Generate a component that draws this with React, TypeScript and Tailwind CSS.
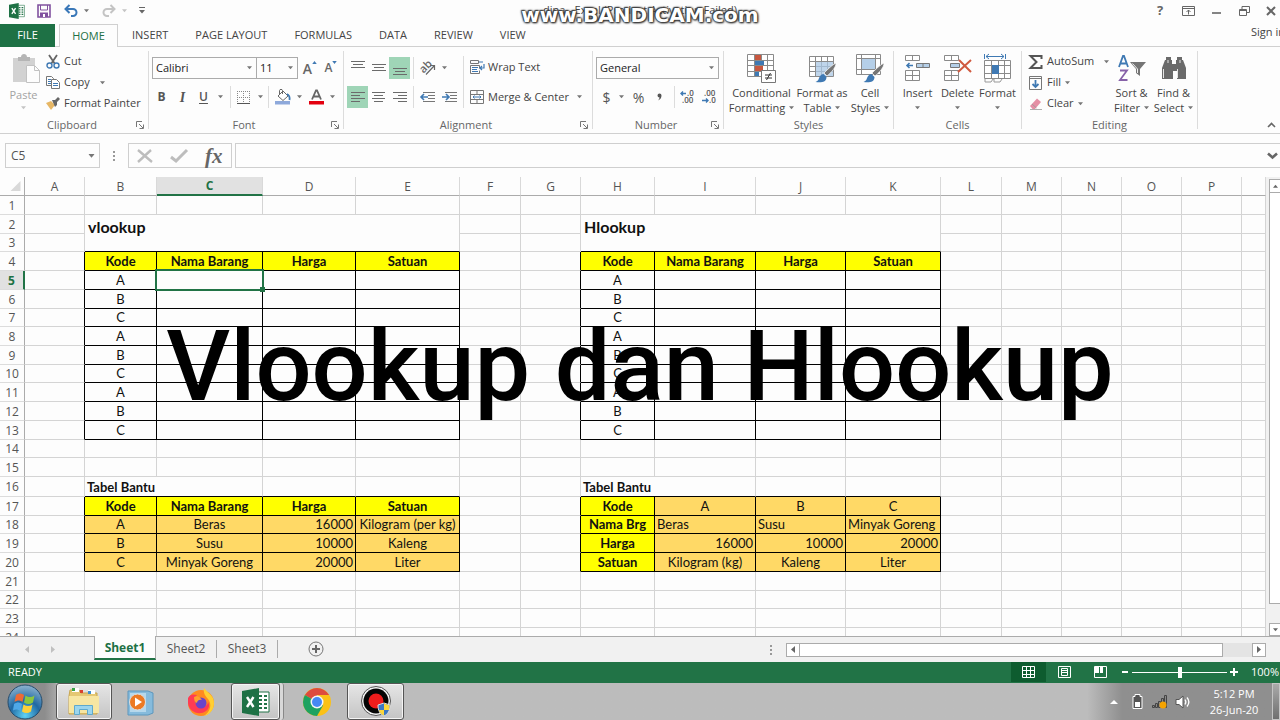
import type { ReactNode } from 'react';
import clsx from 'clsx';

/* ---------- small shared pieces ---------- */

function Caret({ className = 'text-[#777]' }: { className?: string }) {
  return (
    <svg viewBox="0 0 6 4" className={clsx('w-[5px] h-[4px] shrink-0', className)} fill="currentColor" aria-hidden="true">
      <path d="M0 0h6L3 3.6z" />
    </svg>
  );
}

function Icon({ w, h, className, children }: { w: number; h: number; className?: string; children: ReactNode }) {
  return (
    <svg width={w} height={h} viewBox={`0 0 ${w} ${h}`} fill="none" className={clsx('shrink-0 overflow-visible', className)} aria-hidden="true">
      {children}
    </svg>
  );
}

function Group({ title, launcher, className, children }: { title: string; launcher?: boolean; className?: string; children: ReactNode }) {
  return (
    <section aria-label={title} className={clsx('my-1 flex shrink-0 flex-col border-r border-[#dcdcdc]', className)}>
      <div className="flex h-[70px] items-start">{children}</div>
      <div className="flex h-2 items-center text-[#666]">
        <span className="flex-1 pl-2 text-center">{title}</span>
        {launcher ? (
          <button aria-label={`${title} settings`} className="mr-1">
            <Icon w={8} h={8}>
              <path d="M.5 6V.5H6M3 3l4 4M7.5 3.5v4h-4" stroke="#777" />
            </Icon>
          </button>
        ) : (
          <span className="w-2" />
        )}
      </div>
    </section>
  );
}

function SmallButton({ icon, label, caret, wide }: { icon: ReactNode; label: string; caret?: boolean; wide?: boolean }) {
  return (
    <button className="flex h-[21px] items-center whitespace-nowrap">
      <span className="flex w-[18px] justify-start">{icon}</span>
      {label}
      {caret && <Caret className={clsx('text-[#777]', wide ? 'ml-2.5' : 'ml-1')} />}
    </button>
  );
}

function BigButton({ icon, top, bottom, className }: { icon: ReactNode; top: string; bottom?: string; className?: string }) {
  return (
    <button className={clsx('flex shrink-0 flex-col items-center whitespace-nowrap leading-[15px]', className)}>
      <span className="flex h-[34px] items-center">{icon}</span>
      <span>{top}</span>
      <span className="flex h-[15px] items-center gap-1">
        {bottom}
        <Caret />
      </span>
    </button>
  );
}

function Combo({ label, value, className }: { label: string; value: string; className: string }) {
  return (
    <div className={clsx('flex h-[22px] items-center border border-[#ababab] bg-[#fdfdfd] pr-1', className)}>
      <select aria-label={label} className="min-w-0 flex-1 appearance-none pl-[3px] text-[11px] text-[#222]">
        <option>{value}</option>
      </select>
      <Caret />
    </div>
  );
}

function Tool({ label, on, className = 'w-[21px]', children }: { label: string; on?: boolean; className?: string; children: ReactNode }) {
  return (
    <button aria-label={label} className={clsx('flex h-[22px] shrink-0 items-center justify-center', className, on && 'bg-[#9fd5b7]')}>
      {children}
    </button>
  );
}

function Sep() {
  return <span className="h-[22px] w-px shrink-0 bg-[#dcdcdc]" />;
}

/* lines given as [x1, x2] pairs, three pixels apart */
function LineIcon({ rows, y }: { rows: number[][]; y: number }) {
  return (
    <Icon w={14} h={20}>
      {rows.map(([a, b], i) => (
        <path key={i} d={`M${a} ${y + i * 3 + 0.5}H${b}`} stroke="#6b6b6b" />
      ))}
    </Icon>
  );
}

function ExcelLogo({ className }: { className: string }) {
  return (
    <svg viewBox="0 0 28 28" className={className} aria-hidden="true">
      <path d="M15 4h12v20H15z" fill="#fff" stroke="#217346" />
      <path d="M17 7h3v2h-3zM22 7h3v2h-3zM17 11h3v2h-3zM22 11h3v2h-3zM17 15h3v2h-3zM22 15h3v2h-3zM17 19h3v2h-3zM22 19h3v2h-3z" fill="#217346" />
      <path d="M0 3l17-3v28L0 25z" fill="#1e7145" />
      <path d="M5 9l6.5 10M11.500 9L5 19" stroke="#fff" strokeWidth="2.400" />
    </svg>
  );
}

/* ---------- title bar and tabs ---------- */

function TitleBar() {
  return (
    <header className="relative flex h-6 shrink-0 items-center justify-between pb-[3px] pl-[9px]">
      <div className="flex items-center">
        <ExcelLogo className="mr-[12px] h-4 w-4" />
        <button aria-label="Save">
          <Icon w={14} h={14}>
            <path d="M1 1h12v12H1z" stroke="#80519f" strokeWidth="1.600" />
            <path d="M3.500 1v5h7V1" stroke="#80519f" />
            <path d="M3 8.500h8V13H3z" fill="#80519f" />
            <path d="M6 10h2v3H6z" fill="#fff" />
          </Icon>
        </button>
        <button aria-label="Undo" className="ml-[13px] flex items-center gap-[6px]">
          <Icon w={14} h={13}>
            <path d="M1.500 5H9a3.500 3.500 0 0 1 0 7H7M5.500 1l-4 4 4 4" stroke="#3a78b8" strokeWidth="2" />
          </Icon>
          <Caret />
        </button>
        <button aria-label="Redo" className="ml-[13px] flex items-center gap-[6px]">
          <Icon w={14} h={13}>
            <path d="M12.500 5H5a3.500 3.500 0 0 0 0 7h2M8.500 1l4 4-4 4" stroke="#c4c4c4" strokeWidth="2" />
          </Icon>
          <Caret className="text-[#c4c4c4]" />
        </button>
        <button aria-label="Customize toolbar" className="ml-[12px]">
          <Icon w={6} h={7}>
            <path d="M0 .5h6" stroke="#666" />
            <path d="M0 3h6L3 6.500z" fill="#666" />
          </Icon>
        </button>
      </div>
      <h1 className="absolute inset-x-0 -z-10 text-center text-[11px] text-[#444]">dina - Excel (Product Activation Failed)</h1>
      <div className="flex items-center gap-4 pr-1 text-[#666]">
        <button aria-label="Help" className="w-3 text-[13px] font-bold">?</button>
        <button aria-label="Ribbon options">
          <Icon w={13} h={10}>
            <path d="M.5.500h12v9H.5zM.5 2.500h12M6.500 8.500V4M4.500 6l2-2 2 2" stroke="#666" />
          </Icon>
        </button>
        <button aria-label="Minimize">
          <Icon w={12} h={10}><path d="M1 7h9" stroke="#666" strokeWidth="1.600" /></Icon>
        </button>
        <button aria-label="Restore">
          <Icon w={11} h={10}><path d="M.5 3.500h7v6h-7zM3 3.500v-3h7.500v6H8M.5 4.500h7" stroke="#666" /></Icon>
        </button>
        <button aria-label="Close">
          <Icon w={10} h={10}><path d="M1 1l8 8M9 1L1 9" stroke="#666" strokeWidth="2" /></Icon>
        </button>
      </div>
    </header>
  );
}

function Watermark() {
  return (
    <div className="pointer-events-none absolute inset-x-0 top-1 z-20 text-center font-['DejaVu_Sans',sans-serif] text-[20px] leading-[22px] font-bold text-white [text-shadow:0_0_2px_#333,0_0_2px_#333,0_0_3px_#333,1px_1px_2px_#333,-1px_-1px_1px_#555]">
      www.BANDICAM.com
    </div>
  );
}

const tabs = ['INSERT', 'PAGE LAYOUT', 'FORMULAS', 'DATA', 'REVIEW', 'VIEW'];

function TabRow() {
  return (
    <nav className="flex h-[23px] shrink-0 items-stretch overflow-hidden text-[#444]">
      <a href="#file" className="flex w-[55px] items-center justify-center bg-[#1e7145] text-white">FILE</a>
      <span className="w-1 border-b border-[#d0d0d0]" />
      <a href="#home" className="flex w-[59px] items-center justify-center border border-b-0 border-[#d0d0d0] text-[#1e7145]">HOME</a>
      <div className="flex flex-1 items-center gap-[27px] border-b border-[#d0d0d0] pl-[14px]">
        {tabs.map((t) => (
          <a key={t} href={`#${t.toLowerCase().replace(' ', '-')}`} className="whitespace-nowrap">{t}</a>
        ))}
      </div>
      <div className="w-[29px] overflow-hidden border-b border-[#d0d0d0]">
        <button className="whitespace-nowrap">Sign in</button>
      </div>
    </nav>
  );
}

/* ---------- ribbon ---------- */

function Grid({ w = 24, h = 20 }: { w?: number; h?: number }) {
  return <path d={`M.5.500h${w}v${h}h-${w}zM6.500.500v${h}M12.500.500v${h}M18.500.500v${h}M.5 5.500h${w}M.5 10.500h${w}M.5 15.500h${w}`} stroke="#8a8a8a" fill="#fff" />;
}

function Brush({ x, y }: { x: number; y: number }) {
  return (
    <g transform={`translate(${x} ${y})`}>
      <path d="M20 0c0 4-4 9-9 13l-3-3C12 6 16 2 20 0z" fill="#757575" stroke="#fff" strokeWidth=".7" />
      <path d="M7.500 11l3 3c0 5-5 6-11 5 3-1 3-3 4-5s2.500-3 4-3z" fill="#3f79b3" />
    </g>
  );
}

function Clipboard() {
  return (
    <Group title="Clipboard" launcher className="w-[149px]">
      <button className="ml-1 flex w-[39px] flex-col items-center leading-[15px] text-[#a3a3a3]">
        <span className="flex h-[36px] items-center">
          <Icon w={28} h={30} className="ml-1">
            <path d="M1 4h22v24H1z" fill="#d2d2d2" />
            <path d="M6 7V3h3c0-4 6-4 6 0h3v4z" fill="#b5b5b5" />
            <path d="M14.500 11.500h8l5 5v12h-13z" fill="#fdfdfd" stroke="#c2c2c2" />
            <path d="M22.500 11.500v5h5" stroke="#c2c2c2" />
          </Icon>
        </span>
        <span>Paste</span>
        <span className="flex h-[11px] items-center"><Caret className="text-[#c4c4c4]" /></span>
      </button>
      <div className="ml-[3px] flex flex-col">
        <SmallButton
          label="Cut"
          icon={
            <Icon w={14} h={14}>
              <path d="M3 0l6 9M11 0L5 9" stroke="#666" strokeWidth="1.800" />
              <circle cx="3.500" cy="10.500" r="2.500" stroke="#3f79b3" strokeWidth="1.400" />
              <circle cx="10.500" cy="10.500" r="2.500" stroke="#3f79b3" strokeWidth="1.400" />
            </Icon>
          }
        />
        <SmallButton
          label="Copy"
          caret
          wide
          icon={
            <Icon w={14} h={13}>
              <path d="M.5.500h5l2 2v7h-7z" fill="#fff" stroke="#777" />
              <path d="M2 3.500h3M2 5.500h3M2 7.500h3" stroke="#3f79b3" />
              <path d="M5.500 3.500h5l3 3v6h-8z" fill="#fff" stroke="#777" />
              <path d="M7 7.500h5M7 9.500h5" stroke="#3f79b3" />
            </Icon>
          }
        />
        <SmallButton
          label="Format Painter"
          icon={
            <Icon w={14} h={13}>
              <path d="M0 6l5-2 4 4-4 5z" fill="#e7b765" />
              <path d="M6 3l3 0 3-3 2 2-3 3v3l-2 2z" fill="#666" />
            </Icon>
          }
        />
      </div>
    </Group>
  );
}

function FontGroup() {
  return (
    <Group title="Font" launcher className="w-[195px]">
      <div className="flex flex-col gap-[7px] pt-[6px]">
        <div className="flex items-center pl-[3px]">
          <Combo label="Font name" value="Calibri" className="w-[105px]" />
          <Combo label="Font size" value="11" className="w-[41px] border-l-0" />
          <Tool label="Increase font size" className="w-[24px]">
            <span className="text-[14px] font-semibold text-[#666]">A</span>
            <svg viewBox="0 0 6 4" className="mb-3 h-[3px] w-[5px]" fill="#3f79b3" aria-hidden="true"><path d="M0 4h6L3 0z" /></svg>
          </Tool>
          <Tool label="Decrease font size" className="w-[18px]">
            <span className="text-[12px] font-semibold text-[#666]">A</span>
            <svg viewBox="0 0 6 4" className="mb-3 h-[3px] w-[5px]" fill="#3f79b3" aria-hidden="true"><path d="M0 0h6L3 4z" /></svg>
          </Tool>
        </div>
        <div className="flex items-center pl-[2px] text-[12px] text-[#555]">
          <Tool label="Bold"><b>B</b></Tool>
          <Tool label="Italic"><i className="font-['Liberation_Serif',serif] text-[14px] font-bold">I</i></Tool>
          <Tool label="Underline"><span className="font-semibold underline underline-offset-2">U</span></Tool>
          <Tool label="Underline style" className="w-[12px]"><Caret /></Tool>
          <span className="w-1" />
          <Sep />
          <Tool label="Borders" className="w-6">
            <Icon w={13} h={13}>
              <path d="M.5 0v12M6.500 0v12M12.500 0v12M0 .5h13M0 6.500h13" stroke="#888" strokeDasharray="1 1" />
              <path d="M0 12.500h13" stroke="#555" />
            </Icon>
          </Tool>
          <Tool label="Border style" className="w-[10px]"><Caret /></Tool>
          <span className="w-[3px]" />
          <Sep />
          <Tool label="Fill color" className="w-7">
            <Icon w={16} h={16}>
              <path d="M3 7l5-5 5 5-5 4.500z" fill="#fff" stroke="#666" />
              <path d="M7.500 5V1.500c0-1.500-3-1.500-3 0V5" stroke="#666" />
              <path d="M12 5c2 1 3 3 2.500 6" stroke="#3f79b3" strokeWidth="1.800" />
              <path d="M0 12h15v3.500H0z" fill="#8ea9db" />
            </Icon>
          </Tool>
          <Caret />
          <Tool label="Font color" className="w-7">
            <Icon w={15} h={16}>
              <path d="M3 10.500L7 1.500h1l4 9M4.500 7.500h6" stroke="#666" strokeWidth="1.800" />
              <path d="M0 12h15v3.500H0z" fill="#e3000f" />
            </Icon>
          </Tool>
          <Caret />
        </div>
      </div>
    </Group>
  );
}

function IndentIcon({ back }: { back?: boolean }) {
  return (
    <Icon w={16} h={12}>
      <path d="M3 1.500h12M8 4.500h7M8 7.500h7M3 10.500h12" stroke="#777" />
      <path d={back ? 'M8 6H1.500M4 3L1 6l3 3' : 'M0 6h6M4 3l3 3-3 3'} stroke="#3f79b3" strokeWidth="1.600" />
    </Icon>
  );
}

function AlignmentGroup() {
  return (
    <Group title="Alignment" launcher className="w-[249px]">
      <div className="flex h-[57px] w-[119px] flex-col gap-[7px] pt-[6px] pl-[3px]">
        <div className="flex items-center">
          <Tool label="Top align"><LineIcon y={3} rows={[[0, 14], [2, 12], [0, 14]]} /></Tool>
          <Tool label="Middle align"><LineIcon y={6} rows={[[0, 14], [2, 12], [0, 14]]} /></Tool>
          <Tool label="Bottom align" on><LineIcon y={10} rows={[[0, 14], [2, 12], [0, 14]]} /></Tool>
          <span className="w-[3px]" />
          <Sep />
          <Tool label="Orientation" className="w-7">
            <Icon w={16} h={14}>
              <text x="0" y="10" transform="rotate(-45 5 7)" fontSize="11" fontWeight="600" fill="#666" fontFamily="Open Sans, sans-serif">ab</text>
              <path d="M6 13.500L14 5M10 4.500h4.500V9" stroke="#666" strokeWidth="1.200" />
            </Icon>
          </Tool>
          <Caret />
        </div>
        <div className="flex items-center">
          <Tool label="Align left" on><LineIcon y={5} rows={[[0, 14], [0, 9], [0, 14], [0, 9]]} /></Tool>
          <Tool label="Center"><LineIcon y={5} rows={[[0, 13], [2, 11], [0, 13], [2, 11]]} /></Tool>
          <Tool label="Align right"><LineIcon y={5} rows={[[0, 14], [5, 14], [0, 14], [5, 14]]} /></Tool>
          <span className="w-[3px]" />
          <Sep />
          <Tool label="Decrease indent" className="w-7"><IndentIcon back /></Tool>
          <Tool label="Increase indent" className="w-4"><IndentIcon /></Tool>
        </div>
      </div>
      <div className="mt-[5px] flex flex-1 flex-col gap-2 border-l border-[#dcdcdc] pl-[6px]">
        <button className="flex h-[22px] items-center gap-[3px] whitespace-nowrap">
          <Icon w={15} h={14}>
            <path d="M.5.500h8v3h-8zM.5 5.500h9v3M.5 5.500v8h9v-3" stroke="#777" />
            <path d="M2 7.500h6M2 9.500h5M2 11.500h6M9 2h4" stroke="#3f79b3" />
            <path d="M14 4v4h-4M12 6l-2 2 2 2" stroke="#3f79b3" strokeWidth="1.200" />
          </Icon>
          Wrap Text
        </button>
        <button className="flex h-[22px] items-center gap-1 whitespace-nowrap">
          <Icon w={14} h={14}>
            <path d="M.5.500h13v13H.5zM.5 4.500h13M.5 9.500h13M7 .5v4M7 9.500v4" stroke="#777" />
            <path d="M3 7h8M4.500 5.500L3 7l1.500 1.500M9.500 5.500L11 7 9.500 8.500" stroke="#3f79b3" />
          </Icon>
          Merge &amp; Center
          <Caret className="ml-1 text-[#777]" />
        </button>
      </div>
    </Group>
  );
}

function DecimalIcon({ up }: { up?: boolean }) {
  return (
    <Icon w={15} h={14}>
      <g fontSize="8" fontWeight="600" fill="#555" fontFamily="Open Sans, sans-serif">
        <text x={up ? 7 : 2} y="6">{up ? '.0' : '.00'}</text>
        <text x={up ? 2 : 7} y="13">{up ? '.00' : '.0'}</text>
      </g>
      <path d={up ? 'M6 3.500H1M3 1.500L1 3.500l2 2' : 'M0 10.500h6M4 8.500l2 2-2 2'} stroke="#3f79b3" strokeWidth="1.400" />
    </Icon>
  );
}

function NumberGroup() {
  return (
    <Group title="Number" launcher className="w-[131px]">
      <div className="flex flex-1 flex-col gap-[7px] pt-[6px] pl-[3px]">
        <Combo label="Number format" value="General" className="w-[123px]" />
        <div className="flex items-center text-[14px] text-[#555]">
          <Tool label="Currency">$</Tool>
          <Tool label="Currency symbol" className="w-2"><Caret /></Tool>
          <Tool label="Percent" className="w-[27px]">%</Tool>
          <Tool label="Comma style" className="w-[14px]">
            <Icon w={5} h={8}><path d="M.5 2.500a2 2 0 1 1 4 0c0 2-1 4-3.500 5 1-1 1.500-2 1.500-3-1 0-2-.8-2-2z" fill="#555" /></Icon>
          </Tool>
          <span className="w-2" />
          <Sep />
          <Tool label="Increase decimal" className="w-6"><DecimalIcon up /></Tool>
          <Tool label="Decrease decimal"><DecimalIcon /></Tool>
        </div>
      </div>
    </Group>
  );
}

function StylesGroup() {
  return (
    <Group title="Styles" className="w-[170px]">
      <BigButton
        className="ml-[3px] w-[69px]"
        top="Conditional"
        bottom="Formatting"
        icon={
          <Icon w={29} h={29}>
            <path d="M.5.500h26v22h-26zM7.500.500v22M14.500.500v22M20.500.500v22M.5 6.500h26M.5 11.500h26M.5 17.500h26" stroke="#8a8a8a" fill="#fff" />
            <path d="M8 1h6v5H8z" fill="#c8573f" />
            <path d="M8 7h9v4H8z" fill="#3f79b3" />
            <path d="M8 12h8v5H8z" fill="#c8573f" />
            <path d="M8 18h4v4H8z" fill="#3f79b3" />
            <path d="M14.500 16.500h14v12h-14z" fill="#fff" stroke="#777" />
            <path d="M18 21h7M18 24h7M23.500 19l-4 7" stroke="#333" />
          </Icon>
        }
      />
      <BigButton
        className="w-[52px]"
        top="Format as"
        bottom="Table"
        icon={
          <Icon w={29} h={29}>
            <g transform="translate(1 2)">
              <Grid />
              <path d="M7 6h17v14H7z" fill="#a9c7e4" fillOpacity=".75" />
            </g>
            <Brush x={8} y={9} />
          </Icon>
        }
      />
      <BigButton
        className="w-[44px]"
        top="Cell"
        bottom="Styles"
        icon={
          <Icon w={29} h={29}>
            <path d="M.5.500h24v20h-24zM5.500.500v20M19.500.500v20M.5 4.500h24M.5 15.500h24" stroke="#8a8a8a" fill="#fff" />
            <path d="M6 5h13v10H6z" fill="#b5cfe8" />
            <Brush x={8} y={9} />
          </Icon>
        }
      />
    </Group>
  );
}

function CellsGroup() {
  const blocks = 'M.5.500h14v5H.5zM7.500.500v5M.5 15.500h14v10H.5zM7.500 15.500v10M.5 20.500h14';
  return (
    <Group title="Cells" className="w-[128px]">
      <BigButton
        className="ml-1 w-[39px]"
        top="Insert"
        icon={
          <Icon w={26} h={27}>
            <path d={blocks} stroke="#8a8a8a" fill="#fff" />
            <path d="M11.500 8.500h13v4h-13zM18 8.500v4" stroke="#777" fill="#b5cfe8" />
            <path d="M8 10.500H2M4.500 8L2 10.500 4.500 13" stroke="#3f79b3" strokeWidth="1.600" />
          </Icon>
        }
      />
      <BigButton
        className="w-[41px]"
        top="Delete"
        icon={
          <Icon w={28} h={27}>
            <path d={blocks} stroke="#8a8a8a" fill="#fff" />
            <path d="M6.500 8.500h9v4h-9z" stroke="#777" fill="#b5cfe8" />
            <path d="M15 5l12 12M27 5L14 17" stroke="#d0593f" strokeWidth="2" />
          </Icon>
        }
      />
      <BigButton
        className="w-[39px]"
        top="Format"
        icon={
          <Icon w={27} h={29}>
            <path d="M.5 0v5M21.500 0v5M2 2.500h18M5 0L2 2.500 5 5M17 0l3 2.500L17 5" stroke="#3f79b3" />
            <path d="M.5 6.500h26v18H.5zM7.500 6.500v18M14.500 6.500v18M20.500 6.500v18M.5 11.500h26M.5 19.500h26" stroke="#8a8a8a" fill="#fff" />
            <path d="M8 11h7v9H8z" fill="#3f79b3" />
            <path d="M1 25v3h6l2-3h1v3h6l2-3" stroke="#999" />
          </Icon>
        }
      />
    </Group>
  );
}

function EditingGroup() {
  return (
    <Group title="Editing" className="w-[176px]">
      <div className="flex w-[88px] shrink-0 flex-col pl-[7px]">
        <SmallButton
          label="AutoSum"
          caret
          wide
          icon={<Icon w={14} h={14}><path d="M12.500 4V1H1.500l6 6-6 6h11v-3" stroke="#555" strokeWidth="2" /></Icon>}
        />
        <SmallButton
          label="Fill"
          caret
          icon={
            <Icon w={13} h={14}>
              <path d="M.5.500h12v13H.5zM.5 2.500h12" stroke="#777" />
              <path d="M6.500 4v7M3.500 8l3 3 3-3" stroke="#3f79b3" strokeWidth="1.800" />
            </Icon>
          }
        />
        <SmallButton
          label="Clear"
          caret
          icon={
            <Icon w={14} h={12}>
              <path d="M1 8l7-7.500 4 3.500-6 7H3.500z" fill="#e58fa5" />
              <path d="M3 6l4.500 4M1 11.500h12" stroke="#999" strokeWidth=".8" />
            </Icon>
          }
        />
      </div>
      <BigButton
        className="w-[43px]"
        top="Sort &amp;"
        bottom="Filter"
        icon={
          <Icon w={28} h={27}>
            <path d="M1 12L5 1h1l4 11M2.500 8.500h6" stroke="#3f79b3" strokeWidth="1.800" />
            <path d="M2 15.500h7l-7 9.500h7.500" stroke="#8661a8" strokeWidth="1.800" />
            <path d="M12 7h16l-6 7v7l-4-3v-4z" fill="#757575" />
            <path d="M14.500 8.500l5 5.500v4" stroke="#eee" />
          </Icon>
        }
      />
      <BigButton
        className="w-[41px]"
        top="Find &amp;"
        bottom="Select"
        icon={
          <Icon w={26} h={24}>
            <path d="M5 1h5v3h1v4h4V4h1V1h5v3h1l3 8v11h-9v-8h-4v8H1V12l3-8h1z" fill="#6a6a6a" />
            <path d="M2.500 13v9M16.500 13v9M7 4v3M19 4v3" stroke="#e5e5e5" />
          </Icon>
        }
      />
    </Group>
  );
}

function Ribbon() {
  return (
    <div className="flex h-[87px] shrink-0 items-stretch overflow-hidden border-b border-[#d0d0d0] text-[#444]">
      <Clipboard />
      <FontGroup />
      <AlignmentGroup />
      <NumberGroup />
      <StylesGroup />
      <CellsGroup />
      <EditingGroup />
      <button aria-label="Collapse ribbon" className="mr-[4px] mb-[5px] ml-auto self-end">
        <Icon w={9} h={6}><path d="M1 5l3.500-3.500L8 5" stroke="#666" strokeWidth="1.600" /></Icon>
      </button>
    </div>
  );
}

function FormulaBar() {
  return (
    <div className="mt-[9px] mb-[9px] flex h-[25px] shrink-0 items-stretch pl-[5px] text-[12px] text-[#555]">
      <div className="flex w-[95px] items-center border border-[#cfcfcf] pr-[5px] pl-[5px]">
        <input aria-label="Name box" defaultValue="C5" className="min-w-0 flex-1 outline-none" />
        <Caret className="scale-125 text-[#777]" />
      </div>
      <div className="flex w-7 items-center justify-center">
        <Icon w={2} h={12}><path d="M1 1v11" stroke="#999" strokeWidth="2" strokeDasharray="2 2" /></Icon>
      </div>
      <div className="flex w-[104px] items-center justify-around border border-[#cfcfcf]">
        <button aria-label="Cancel">
          <Icon w={16} h={14}><path d="M1 1l14 12M14 1L1 13" stroke="#bdbdbd" strokeWidth="2.400" /></Icon>
        </button>
        <button aria-label="Enter">
          <Icon w={18} h={14}><path d="M1 8l5 4L17 1" stroke="#bdbdbd" strokeWidth="3" /></Icon>
        </button>
        <button aria-label="Insert function" className="font-['Liberation_Serif',serif] text-[21px] leading-[20px] font-bold text-[#666] italic">fx</button>
      </div>
      <div className="ml-[3px] flex flex-1 items-center border border-r-0 border-[#cfcfcf] pr-[2px]">
        <input aria-label="Formula" className="min-w-0 flex-1 outline-none" />
        <button aria-label="Expand formula bar">
          <Icon w={11} h={8}><path d="M1 1.500l4.500 4 4.500-4" stroke="#666" strokeWidth="2.600" /></Icon>
        </button>
      </div>
    </div>
  );
}

/* ---------- worksheet ---------- */

const columns = [
  { id: 'A', w: 'w-[60px]' },
  { id: 'B', w: 'w-[72px]' },
  { id: 'C', w: 'w-[106px]' },
  { id: 'D', w: 'w-[93px]' },
  { id: 'E', w: 'w-[104px]' },
  { id: 'F', w: 'w-[61px]' },
  { id: 'G', w: 'w-[60px]' },
  { id: 'H', w: 'w-[74px]' },
  { id: 'I', w: 'w-[101px]' },
  { id: 'J', w: 'w-[90px]' },
  { id: 'K', w: 'w-[95px]' },
  { id: 'L', w: 'w-[61px]' },
  { id: 'M', w: 'w-[60px]' },
  { id: 'N', w: 'w-[60px]' },
  { id: 'O', w: 'w-[60px]' },
  { id: 'P', w: 'w-[60px]' },
  { id: '', w: '' },
];

const shortRows = [3, 7, 10, 14, 18, 22];

type Kind = 'head' | 'plain' | 'gold' | 'goldLeft' | 'goldRight';

const kinds: Record<Kind, string> = {
  head: 'bg-[#ffff00] text-center font-bold',
  plain: 'text-center',
  gold: 'bg-[#ffd966] text-center',
  goldLeft: 'bg-[#ffd966] pl-[2px] text-left',
  goldRight: 'bg-[#ffd966] pr-[2px] text-right',
};

const cells: Record<string, [string, Kind]> = {};

function fill(row: number, start: string, values: string[], rowKinds: Kind[]) {
  values.forEach((v, i) => {
    cells[String.fromCharCode(start.charCodeAt(0) + i) + row] = [v, rowKinds[i]];
  });
}

const heads: Kind[] = ['head', 'head', 'head', 'head'];

for (const start of ['B', 'H']) {
  fill(4, start, ['Kode', 'Nama Barang', 'Harga', 'Satuan'], heads);
  for (let r = 5; r <= 13; r++) fill(r, start, ['ABC'[(r - 5) % 3]], ['plain']);
}
fill(17, 'B', ['Kode', 'Nama Barang', 'Harga', 'Satuan'], heads);
fill(18, 'B', ['A', 'Beras', '16000', 'Kilogram (per kg)'], ['gold', 'gold', 'goldRight', 'gold']);
fill(19, 'B', ['B', 'Susu', '10000', 'Kaleng'], ['gold', 'gold', 'goldRight', 'gold']);
fill(20, 'B', ['C', 'Minyak Goreng', '20000', 'Liter'], ['gold', 'gold', 'goldRight', 'gold']);
fill(17, 'H', ['Kode', 'A', 'B', 'C'], ['head', 'gold', 'gold', 'gold']);
fill(18, 'H', ['Nama Brg', 'Beras', 'Susu', 'Minyak Goreng'], ['head', 'goldLeft', 'goldLeft', 'goldLeft']);
fill(19, 'H', ['Harga', '16000', '10000', '20000'], ['head', 'goldRight', 'goldRight', 'goldRight']);
fill(20, 'H', ['Satuan', 'Kilogram (kg)', 'Kaleng', 'Liter'], ['head', 'gold', 'gold', 'gold']);

function boxed(col: number, row: number) {
  const inCols = (col >= 1 && col <= 4) || (col >= 7 && col <= 10);
  const inRows = (row >= 4 && row <= 13) || (row >= 17 && row <= 20);
  return inCols && inRows;
}

function SheetCell({ col, row }: { col: number; row: number }) {
  const id = columns[col].id;
  const inTable = (col >= 1 && col <= 4) || (col >= 7 && col <= 10);

  // merged titles over rows 2 and 3
  if (inTable && (row === 2 || row === 3)) {
    if (row === 3 || (id !== 'B' && id !== 'H')) return null;
    return (
      <td colSpan={4} rowSpan={2} className="border-r border-b border-r-[#d4d4d4] border-b-black pl-[3px] align-top text-[16px] leading-[24px] font-bold">
        {id === 'B' ? 'vlookup' : 'Hlookup'}
      </td>
    );
  }
  if (row === 16 && (id === 'C' || id === 'I')) return null;
  if (row === 16 && (id === 'B' || id === 'H')) {
    return <td colSpan={2} className="border-r border-b border-r-[#d4d4d4] border-b-black pl-[2px] align-bottom font-bold">Tabel Bantu</td>;
  }

  const cell = cells[id + row];
  return (
    <td
      className={clsx(
        'border-r border-b p-0 whitespace-nowrap',
        boxed(col, row) || boxed(col + 1, row) ? 'border-r-black' : 'border-r-[#d4d4d4]',
        boxed(col, row) || boxed(col, row + 1) ? 'border-b-black' : 'border-b-[#d4d4d4]',
        cell && kinds[cell[1]],
        id + row === 'C5' && 'relative',
      )}
    >
      {cell?.[0]}
      {id + row === 'C5' && (
        <span className="absolute -top-[2px] -right-[2px] -bottom-[2px] -left-[2px] border-2 border-[#217346]">
          <span className="absolute -right-[3px] -bottom-[3px] h-[5px] w-[5px] bg-[#217346]" />
        </span>
      )}
    </td>
  );
}

function Worksheet() {
  return (
    <table className="w-full table-fixed border-separate border-spacing-0 border-b border-[#ababab] font-['Lato',sans-serif] text-[13px] leading-[17px] text-[#111]">
      <colgroup>
        <col className="w-[25px]" />
        {columns.map((c, i) => <col key={i} className={c.w} />)}
      </colgroup>
      <thead>
        <tr className="h-[19px] font-['Open_Sans',sans-serif] text-[12px] text-[#555]">
          <th aria-label="Select all" className="border-r border-b border-[#ababab] p-0">
            <svg viewBox="0 0 10 10" className="ml-auto mr-[3px] h-[10px] w-[11px]" fill="#d9d9d9" aria-hidden="true"><path d="M10 0v10H0z" /></svg>
          </th>
          {columns.map((c, i) => (
            <th
              key={i}
              className={clsx(
                'border-r border-b p-0 border-r-[#d9d9d9]',
                c.id === 'C' ? 'border-b-2 border-b-[#217346] bg-[#e1e1e1] font-bold text-[#1e7145]' : 'border-b-[#ababab] font-normal',
              )}
            >
              {c.id}
            </th>
          ))}
        </tr>
      </thead>
      <tbody>
        {Array.from({ length: 24 }, (_, i) => i + 1).map((row) => (
          <tr key={row} className={row === 16 ? 'h-[20px]' : shortRows.includes(row) ? 'h-[18px]' : 'h-[19px]'}>
            <th
              className={clsx(
                "border-b border-b-[#dcdcdc] p-0 font-['Open_Sans',sans-serif] text-[12px]",
                row === 5 ? 'border-r-2 border-r-[#217346] bg-[#e1e1e1] font-bold text-[#1e7145]' : 'border-r border-r-[#ababab] font-normal text-[#555]',
              )}
            >
              {row}
            </th>
            {columns.map((_, col) => <SheetCell key={col} col={col} row={row} />)}
          </tr>
        ))}
      </tbody>
    </table>
  );
}

function SheetArea() {
  return (
    <main className="relative flex min-h-0 flex-1">
      <div className="min-w-0 flex-1 overflow-hidden">
        <Worksheet />
      </div>
      <div className="flex w-[14px] flex-col bg-[#f1f1f1] pt-[2px] pl-[3px]">
        <button aria-label="Scroll up" className="flex h-[14px] items-center justify-center border border-r-0 border-[#ababab] bg-white">
          <Caret className="rotate-180 text-[#666]" />
        </button>
        <div className="h-[411px] border border-t-0 border-r-0 border-[#ababab] bg-white" />
        <button aria-label="Scroll down" className="mt-auto flex h-[13px] items-center justify-center border border-r-0 border-[#ababab] bg-white">
          <Caret className="text-[#666]" />
        </button>
      </div>
    </main>
  );
}

/* ---------- bottom bars ---------- */

function Triangle({ left, className }: { left?: boolean; className: string }) {
  return (
    <svg viewBox="0 0 4 7" className={clsx('h-[7px] w-[4px]', className)} fill="currentColor" aria-hidden="true">
      <path d={left ? 'M4 0v7L0 3.500z' : 'M0 0v7l4-3.500z'} />
    </svg>
  );
}

function SheetTabs() {
  return (
    <div className="flex h-[26px] shrink-0 items-start border-t border-[#ababab] bg-[#f1f1f1] text-[12px] text-[#555]">
      <div className="flex h-6 w-[94px] items-center gap-[22px] pl-[25px] text-[#c0c0c0]">
        <button aria-label="Previous sheet"><Triangle left className="text-[#c0c0c0]" /></button>
        <button aria-label="Next sheet"><Triangle className="text-[#c0c0c0]" /></button>
      </div>
      <button className="-mt-px h-[24px] w-[62px] border-r border-b-2 border-l border-r-[#ababab] border-b-[#217346] border-l-[#ababab] bg-[#fdfdfd] pt-[2px] font-bold text-[#1e7145]">Sheet1</button>
      <button className="mt-[3px] h-[18px] w-[61px] border-r border-[#ababab]">Sheet2</button>
      <button className="mt-[3px] h-[18px] w-[61px] border-r border-[#ababab]">Sheet3</button>
      <button aria-label="New sheet" className="mt-1 ml-[30px]">
        <Icon w={16} h={16}>
          <circle cx="8" cy="8" r="7" stroke="#777" />
          <path d="M4 8h8M8 4v8" stroke="#666" strokeWidth="2" />
        </Icon>
      </button>
      <div className="mr-[14px] ml-auto flex h-[14px] w-[496px] items-stretch self-center">
        <span className="flex w-[7px] items-center">
          <Icon w={2} h={10}><path d="M1 0v10" stroke="#999" strokeWidth="2" strokeDasharray="2 2" /></Icon>
        </span>
        <button aria-label="Scroll left" className="ml-auto flex w-[14px] items-center justify-center border border-[#ababab] bg-white"><Triangle left className="text-[#666]" /></button>
        <div className="flex w-[452px] bg-[#e4e4e4]">
          <div className="w-[423px] border border-l-0 border-[#ababab] bg-white" />
        </div>
        <button aria-label="Scroll right" className="flex w-[14px] items-center justify-center border border-[#ababab] bg-white"><Triangle className="text-[#666]" /></button>
      </div>
    </div>
  );
}

function StatusBar() {
  return (
    <div className="flex h-[21px] shrink-0 items-center bg-[#217346] pb-px pl-2 text-[11px] text-white">
      <span>READY</span>
      <button aria-label="Normal view" className="ml-auto flex h-full w-[35px] items-center justify-center bg-[#0e5c2f]">
        <Icon w={13} h={12}><path d="M.5.500h12v11H.5zM4.500.500v11M8.500.500v11M.5 4.500h12M.5 8.500h12" stroke="#fff" /></Icon>
      </button>
      <button aria-label="Page layout view" className="flex h-full w-[37px] items-center justify-center">
        <Icon w={13} h={12}><path d="M.5.500h12v11H.5zM3.500 2.500h6v7h-6zM4 4.500h5M4 6.500h5" stroke="#fff" /></Icon>
      </button>
      <button aria-label="Page break view" className="flex h-full w-[35px] items-center justify-center">
        <Icon w={13} h={12}><path d="M.5.500h12v11H.5z" stroke="#fff" /><path d="M1 1h4v6H1zM6 1h3v6H6z" fill="#fff" /></Icon>
      </button>
      <button aria-label="Zoom out" className="ml-1">
        <Icon w={7} h={8}><path d="M0 4h6" stroke="#fff" strokeWidth="2" /></Icon>
      </button>
      <input
        type="range"
        aria-label="Zoom"
        defaultValue={50}
        className="mx-[3px] h-[11px] w-[95px] appearance-none bg-[linear-gradient(#fff,#fff)] bg-[length:100%_1px] bg-center bg-no-repeat [&::-webkit-slider-thumb]:h-[11px] [&::-webkit-slider-thumb]:w-1 [&::-webkit-slider-thumb]:appearance-none [&::-webkit-slider-thumb]:bg-white"
      />
      <button aria-label="Zoom in">
        <Icon w={8} h={8}><path d="M0 4h8M4 0v8" stroke="#fff" strokeWidth="2" /></Icon>
      </button>
      <span className="mr-px ml-[13px]">100%</span>
    </div>
  );
}

const activeTile = 'border border-[#555] rounded-[3px] bg-linear-to-b from-[#e6e6e6] to-[#c4c4c4] shadow-[inset_0_0_0_1px_#f4f4f4]';

function StartOrb() {
  return (
    <svg viewBox="0 0 36 36" className="h-9 w-9" aria-hidden="true">
      <defs>
        <radialGradient id="orb" cx=".5" cy=".9" r=".9">
          <stop offset="0" stopColor="#5fd3f5" />
          <stop offset=".5" stopColor="#1f68a3" />
          <stop offset="1" stopColor="#8fb4cf" />
        </radialGradient>
      </defs>
      <circle cx="18" cy="18" r="17" fill="url(#orb)" stroke="#244b6b" />
      <path d="M9 11c3-2 5-2 8 0l-1.500 7c-3-2-5-2-8 0z" fill="#ee6a35" />
      <path d="M18.500 11.500c3 2 6 2 9 0L26 18.500c-3 2-6 2-9 0z" fill="#8cc63f" />
      <path d="M7 20c3-2 5-2 8 0l-1.500 7c-3-2-5-2-7.500-.5z" fill="#4fa8e8" />
      <path d="M16.500 20.500c3 2 6 2 9 0L24 27.500c-3 2-6 2-9 0z" fill="#fcd03c" />
    </svg>
  );
}

function Taskbar() {
  return (
    <footer className="flex h-[37px] shrink-0 items-stretch bg-[#bcbcbc] text-white">
      <button aria-label="Start" className="flex w-[56px] items-center bg-linear-to-r from-[#8d8d8d] from-80% to-[#a8a8a8] pl-[7px]"><StartOrb /></button>
      <button aria-label="File Explorer" className={clsx('flex w-[56px] items-center justify-center', activeTile)}>
        <Icon w={32} h={30}>
          <path d="M1 9l1-6h9l2 3h16v21H1z" fill="#e5c873" stroke="#c9a64e" />
          <path d="M4 1h7v4H4zM20 3h7v4h-7z" fill="#fff" />
          <path d="M4 1h3v3H4z" fill="#37a447" />
          <path d="M12 3h3v3h-3z" fill="#d9412f" />
          <path d="M20 4h3v3h-3z" fill="#3b8fd1" />
          <path d="M1 9h30v17H1z" fill="#f7e6a2" />
          <path d="M6.500 27.500v-9h18v9h-5v-5h-8v5z" fill="#9bd5ee" stroke="#5fa9cc" />
        </Icon>
      </button>
      <button aria-label="Media Player" className="flex w-[58px] items-center justify-center">
        <Icon w={28} h={26}>
          <path d="M1 2h20l5 2v20l-5 2H1z" fill="#86bbdc" stroke="#5d97bd" />
          <path d="M3 4h16v19H3z" fill="#b5d8ec" />
          <circle cx="10.500" cy="13" r="8" fill="#ec7a24" stroke="#d9dfe3" />
          <path d="M8 8.500l7 4.500-7 4.500z" fill="#fff" />
        </Icon>
      </button>
      <button aria-label="Firefox" className="flex w-[61px] items-center justify-center">
        <Icon w={30} h={30}>
          <circle cx="15" cy="16" r="13" fill="#ff8a1f" />
          <path d="M2 11C5 6 8 8 11 8c-3 3-3 7-1 9 4 5 12 3 12-2 2 3 1 7-2 9-7 5-17 1-18-8z" fill="#ff3b53" />
          <path d="M18 1c2 3 7 6 9 10 3 8-1 16-9 18 7-5 8-12 4-17-3-3-5-7-4-11z" fill="#ffcf33" />
          <circle cx="15" cy="16" r="5.500" fill="#6a44c9" />
          <path d="M8 10c3-2 6 0 8 3-3-1-5 1-5 3-2-1-3-3-3-6z" fill="#ffa02e" />
        </Icon>
      </button>
      <button aria-label="Excel" className={clsx('flex w-[49px] items-center justify-center', activeTile)}><ExcelLogo className="h-7 w-7" /></button>
      <span className="w-1 rounded-r-[3px] border-r border-[#888] bg-[#d8d8d8]" />
      <button aria-label="Chrome" className="flex w-[63px] items-center justify-center pl-[2px]">
        <svg viewBox="0 0 28 28" className="h-7 w-7" aria-hidden="true">
          <circle cx="14" cy="14" r="14" fill="#fbc116" />
          <path d="M14 14L1.900 7A14 14 0 0 1 26.100 7H14z" fill="#dd4b3e" />
          <path d="M1.900 7A14 14 0 0 0 14 28l6-10.500-6-3.500z" fill="#1da261" />
          <circle cx="14" cy="14" r="6.500" fill="#f5f5f5" />
          <circle cx="14" cy="14" r="5" fill="#4688f4" />
        </svg>
      </button>
      <button aria-label="Bandicam" className={clsx('flex w-[57px] items-center justify-center', activeTile)}>
        <Icon w={32} h={32}>
          <circle cx="16" cy="15" r="14.500" fill="#f4f4f4" stroke="#555" />
          <circle cx="16" cy="15" r="12.500" fill="#050505" />
          <circle cx="16" cy="15" r="7.500" fill="#ee1c1c" />
          <path d="M18 19l6-2 6 2c0 6-2 9-6 11-4-2-6-5-6-11z" fill="#3b78c4" stroke="#ddd" />
          <path d="M24 17.500l5.500 2-.5 4.500h-5zM24 24v5.500c-3-1-4.500-3-5-5.500z" fill="#fcd63c" />
        </Icon>
      </button>
      <div className="flex flex-1 items-center justify-end bg-linear-to-r from-[#bcbcbc] from-78% to-[#8f8f8f] to-82%">
        <button aria-label="Show hidden icons">
          <svg viewBox="0 0 8 4" className="h-1 w-2" fill="#fff" aria-hidden="true"><path d="M0 4h8L4 0z" /></svg>
        </button>
        <Icon w={11} h={15} className="ml-[14px]">
          <path d="M3 .5h5v2h2v12H1v-12h2z" stroke="#fff" fill="#555" />
          <path d="M3 8h5v5H3z" fill="#fff" />
        </Icon>
        <Icon w={16} h={14} className="ml-[9px]">
          <path d="M.5 10.500h2v2h-2zM3.500 8.500h2v4h-2zM6.500 6.500h2v6h-2zM9.500 3.500h2v9h-2zM12.500.500h2v12h-2z" fill="#888" stroke="#444" />
          <circle cx="11" cy="10" r="3.500" fill="#f5a300" />
        </Icon>
        <Icon w={16} h={14} className="ml-[7px]">
          <path d="M1 4.500h3L8 1v12L4 9.500H1z" fill="#fff" stroke="#555" />
          <path d="M10 4.500c1 1.500 1 3.500 0 5M12 2.500c2.500 3 2.500 6 0 9" stroke="#fff" strokeWidth="1.300" />
        </Icon>
        <div className="ml-3 w-[62px] text-center text-[11px] leading-[16px]">
          <div>5:12 PM</div>
          <div>26-Jun-20</div>
        </div>
        <button aria-label="Show desktop" className="ml-[7px] h-full w-2 border border-[#c4c4c4] bg-linear-to-b from-[#aaa] to-[#6f6f6f]" />
      </div>
    </footer>
  );
}

export default function App() {
  return (
    <div className="relative isolate flex h-screen flex-col overflow-hidden bg-[#fdfdfd] font-['Open_Sans',sans-serif] text-[11px]">
      <TitleBar />
      <Watermark />
      <TabRow />
      <Ribbon />
      <FormulaBar />
      <SheetArea />
      <SheetTabs />
      <StatusBar />
      <Taskbar />
      <div className="pointer-events-none absolute inset-x-0 top-[317px] z-30 text-center font-['Roboto',sans-serif] text-[99px] leading-[98px] font-medium whitespace-nowrap text-black">
        Vlookup dan Hlookup
      </div>
    </div>
  );
}
